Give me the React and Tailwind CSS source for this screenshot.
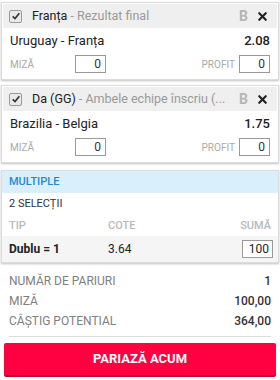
import { X } from "lucide-react";

const Check = () => (
  <span className="flex h-[13px] w-[13px] shrink-0 items-center justify-center rounded-[2px] border border-[#9a9a9a] bg-[#e9e9e9]">
    <svg viewBox="0 0 12 12" className="h-[10px] w-[10px]">
      <path d="M2 6.5 L4.8 9 L10 2.8" fill="none" stroke="#333" strokeWidth="2" />
    </svg>
  </span>
);

const Selection = ({ pick, market, match, odd }) => (
  <div className="mx-[1px] border border-[#dcdcdc] bg-white shadow-[0_1px_2px_rgba(0,0,0,0.25)]">
    <div className="m-[1px] flex h-[24px] items-center bg-[#efefef] pl-[6px] pr-[8px]">
      <Check />
      <div className="ml-[10px] min-w-0 flex-1 overflow-hidden whitespace-nowrap text-[12.5px]">
        <span className="text-[#222]">{pick}</span>
        <span className="text-[#9a9a9a]"> - {market}</span>
      </div>
      <span className="ml-1 text-[14px] font-bold text-[#b5b5b5]">B</span>
      <X className="ml-[8px] h-[13px] w-[13px] shrink-0 text-[#222]" strokeWidth={4} />
    </div>
    <div className="flex h-[24px] items-center justify-between px-[8px] text-[13px] text-[#222]">
      <span>{match}</span>
      <span className="font-medium">{odd}</span>
    </div>
    <div className="flex h-[26px] items-center px-[8px] pb-[4px] text-[10px] text-[#a9a9a9]">
      <span className="w-[65px]">MIZĂ</span>
      <span className="flex h-[18px] w-[31px] items-center justify-end border border-[#999] pr-[4px] text-[12px] text-[#333]">0</span>
      <span className="ml-auto mr-[4px]">PROFIT</span>
      <span className="flex h-[18px] w-[31px] items-center justify-end border border-[#999] pr-[4px] text-[12px] text-[#333]">0</span>
    </div>
  </div>
);

const Stat = ({ label, value }) => (
  <div className="flex h-[20px] items-center justify-between text-[12px]">
    <span className="text-[#808080]">{label}</span>
    <span className="font-medium text-[#333]">{value}</span>
  </div>
);

export default function App() {
  return (
    <div className="h-[380px] w-[280px] bg-white pt-[2px] font-['Roboto',sans-serif]">
      <Selection pick="Franța" market="Rezultat final" match="Uruguay - Franța" odd="2.08" />
      <div className="h-[5px]" />
      <Selection pick="Da (GG)" market="Ambele echipe înscriu (..." match="Brazilia - Belgia" odd="1.75" />
      <div className="mx-[1px] mt-[7px] border border-[#dcdcdc] bg-white shadow-[0_1px_2px_rgba(0,0,0,0.25)]">
        <div className="flex h-[22px] items-center bg-[#d9effc] px-[7px] text-[11px] font-medium text-[#1d8ad0]">
          MULTIPLE
        </div>
        <div className="flex h-[22px] items-center px-[7px] text-[11px] text-[#333]">2 SELECȚII</div>
        <div className="flex h-[21px] items-end px-[7px] pb-[2px] text-[11px] font-medium text-[#b9b9b9]">
          <span className="w-[99px]">TIP</span>
          <span>COTE</span>
          <span className="ml-auto">SUMĂ</span>
        </div>
        <div className="flex h-[26px] items-center bg-[#f5f5f5] pl-[7px] pr-[5px] text-[12px] text-[#222]">
          <span className="w-[99px] font-bold">Dublu = 1</span>
          <span>3.64</span>
          <span className="ml-auto flex h-[18px] w-[31px] items-center justify-end border border-[#999] bg-white pr-[3px] text-[12px]">100</span>
        </div>
      </div>
      <div className="mt-[8px] px-[9px]">
        <Stat label="NUMĂR DE PARIURI" value="1" />
        <Stat label="MIZĂ" value="100,00" />
        <Stat label="CÂȘTIG POTENTIAL" value="364,00" />
      </div>
      <div className="mx-[9px] mt-[5px] h-px bg-[#dcdcdc]" />
      <button className="mx-[4px] mt-[6px] flex h-[32px] w-[272px] items-center justify-center rounded-[2px] bg-[#ff0040] text-[13px] font-bold text-white shadow-[0_2px_0_#c8002f]">
        PARIAZĂ ACUM
      </button>
    </div>
  );
}
